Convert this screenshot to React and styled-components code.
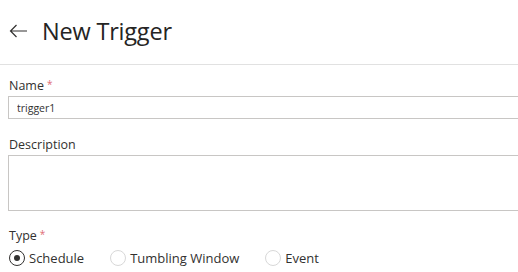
import React from "react";
import styled, { createGlobalStyle } from "styled-components";

const Global = createGlobalStyle`
  html, body { margin: 0; padding: 0; background: #fff; }
  body { font-family: "Open Sans", "Noto Sans", sans-serif; color: #323130; overflow: hidden; }
  * { box-sizing: border-box; }
`;

const Page = styled.div`
  width: 518px;
  height: 272px;
  overflow: hidden;
`;

const Header = styled.header`
  height: 65px;
  display: flex;
  align-items: center;
  gap: 14px;
  padding: 0 0 2px 8px;
  border-bottom: 1px solid #e1e1e1;
`;

const BackButton = styled.button`
  border: 0;
  background: none;
  padding: 0;
  width: 20px;
  height: 20px;
  display: flex;
  align-items: center;
  justify-content: center;
  color: #323130;
`;

const Title = styled.h1`
  margin: 0;
  font-size: 23.5px;
  font-weight: 400;
  letter-spacing: -0.2px;
  color: #252423;
`;

const Form = styled.div`
  padding: 12px 0 0 8px;
  display: flex;
  flex-direction: column;
`;

const Field = styled.div`
  display: flex;
  flex-direction: column;
  margin-bottom: ${(p) => p.$gap || 0}px;
`;

const Label = styled.label`
  display: block;
  height: 19px;
  font-size: 12.5px;
  line-height: 18px;
  padding-left: 1px;
  color: #323130;
`;

const Required = styled.span`
  color: #e06c75;
  margin-left: 3px;
  font-size: 10px;
  line-height: 0;
  position: relative;
  top: -2px;
`;

const Input = styled.input`
  width: 530px;
  height: 23px;
  border: 1px solid #c8c6c4;
  border-right: 0;
  padding: 0 8px;
  font-family: inherit;
  font-size: 10.5px;
  color: #323130;
  outline: none;
`;

const TextArea = styled.textarea`
  width: 530px;
  height: 56px;
  border: 1px solid #c8c6c4;
  border-right: 0;
  resize: none;
  font-family: inherit;
  outline: none;
  display: block;
`;

const RadioRow = styled.div`
  display: flex;
  align-items: center;
  gap: 26px;
  padding-left: 1px;
  margin-top: 3px;
`;

const RadioOption = styled.label`
  display: flex;
  align-items: center;
  gap: 4px;
  font-size: 13px;
  color: #323130;
`;

const Circle = styled.span`
  width: 16px;
  height: 16px;
  border-radius: 50%;
  border: 1px solid ${(p) => (p.$checked ? "#323130" : "#d8d8d8")};
  display: flex;
  align-items: center;
  justify-content: center;
  &::after {
    content: "";
    width: 6px;
    height: 6px;
    border-radius: 50%;
    background: ${(p) => (p.$checked ? "#323130" : "transparent")};
  }
`;

const Radio = ({ checked, children }) => (
  <RadioOption>
    <Circle $checked={checked} />
    {children}
  </RadioOption>
);

export default function App() {
  return (
    <Page>
      <Global />
      <Header>
        <BackButton aria-label="Back">
          <svg width="19" height="14" viewBox="0 0 19 14" fill="none" stroke="#323130" strokeWidth="1.2">
            <path d="M18 7H1.5M7.5 1L1.5 7l6 6" />
          </svg>
        </BackButton>
        <Title>New Trigger</Title>
      </Header>
      <Form>
        <Field $gap={17}>
          <Label>
            Name<Required>*</Required>
          </Label>
          <Input defaultValue="trigger1" />
        </Field>
        <Field $gap={16}>
          <Label>Description</Label>
          <TextArea />
        </Field>
        <Field>
          <Label>
            Type<Required>*</Required>
          </Label>
          <RadioRow>
            <Radio checked>Schedule</Radio>
            <Radio>Tumbling Window</Radio>
            <Radio>Event</Radio>
          </RadioRow>
        </Field>
      </Form>
    </Page>
  );
}
